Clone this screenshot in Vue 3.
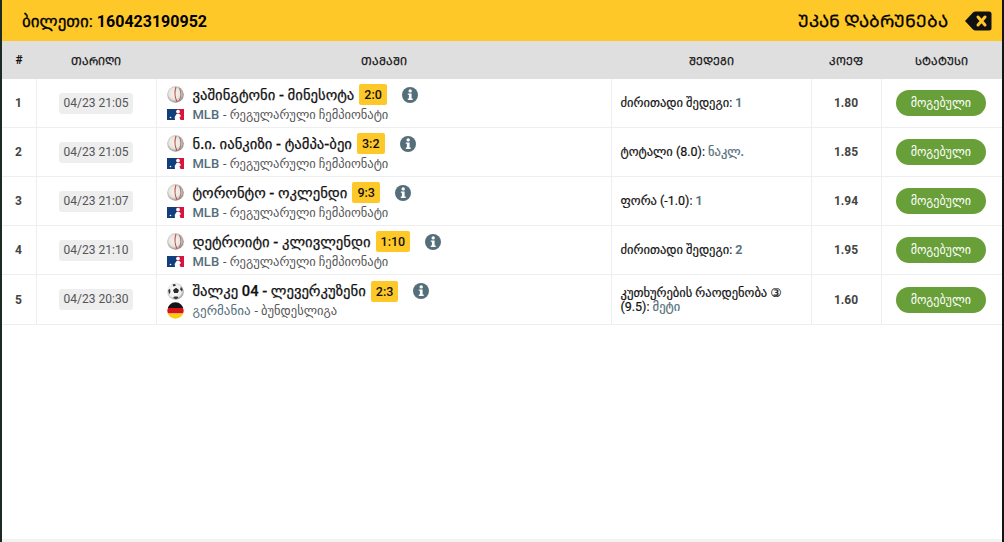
<script setup>
const rows = [
  { n: 1, date: '04/23 21:05', game: 'ვაშინგტონი - მინესოტა', score: '2:0', sport: 'b', league: 'MLB', sub: 'რეგულარული ჩემპიონატი', pick: 'ძირითადი შედეგი:', val: '1', odd: '1.80' },
  { n: 2, date: '04/23 21:05', game: 'ნ.ი. იანკიზი - ტამპა-ბეი', score: '3:2', sport: 'b', league: 'MLB', sub: 'რეგულარული ჩემპიონატი', pick: 'ტოტალი (8.0):', val: 'ნაკლ.', odd: '1.85' },
  { n: 3, date: '04/23 21:07', game: 'ტორონტო - ოკლენდი', score: '9:3', sport: 'b', league: 'MLB', sub: 'რეგულარული ჩემპიონატი', pick: 'ფორა (-1.0):', val: '1', odd: '1.94' },
  { n: 4, date: '04/23 21:10', game: 'დეტროიტი - კლივლენდი', score: '1:10', sport: 'b', league: 'MLB', sub: 'რეგულარული ჩემპიონატი', pick: 'ძირითადი შედეგი:', val: '2', odd: '1.95' },
  { n: 5, date: '04/23 20:30', game: 'შალკე 04 - ლევერკუზენი', score: '2:3', sport: 's', league: 'გერმანია', sub: 'ბუნდესლიგა', pick: 'კუთხურების რაოდენობა ③ (9.5):', val: 'მეტი', odd: '1.60' }
]
</script>

<template>
  <div class="page">
    <header class="top">
      <div class="ticket"><span class="ticket-label">ბილეთი:</span> 160423190952</div>
      <div class="back">
        <span class="back-text">ᲣᲙᲐᲜ ᲓᲐᲑᲠᲣᲜᲔᲑᲐ</span>
        <svg class="back-icon" width="27" height="20" viewBox="0 0 27 20">
          <path d="M0 10 8 1.500Q9 .5 10.500 .5H24Q26.500 .5 26.500 3V17Q26.500 19.500 24 19.500H10.500Q9 19.500 8 18.500Z" fill="#111" />
          <path d="M13 6 20 14M20 6 13 14" stroke="#ffc829" stroke-width="3" stroke-linecap="round" />
        </svg>
      </div>
    </header>
    <table class="tbl">
      <colgroup>
        <col class="c1" /><col class="c2" /><col class="c3" /><col class="c4" /><col class="c5" /><col class="c6" />
      </colgroup>
      <thead>
        <tr>
          <th class="hash">#</th><th>ᲗᲐᲠᲘᲦᲘ</th><th>ᲗᲐᲛᲐᲨᲘ</th><th>ᲨᲔᲓᲔᲒᲘ</th><th>ᲙᲝᲔᲤ</th><th>ᲡᲢᲐᲢᲣᲡᲘ</th>
        </tr>
      </thead>
      <tbody>
        <tr v-for="r in rows" :key="r.n">
          <td class="num">{{ r.n }}</td>
          <td class="center"><span class="date">{{ r.date }}</span></td>
          <td class="game">
            <div class="line1">
              <svg v-if="r.sport === 'b'" class="ball" width="17" height="17" viewBox="0 0 17 17">
                <defs>
                  <radialGradient id="bg" cx="45%" cy="45%" r="58%">
                    <stop offset="0%" stop-color="#f7f4f1" />
                    <stop offset="60%" stop-color="#e9e4df" />
                    <stop offset="100%" stop-color="#85807c" />
                  </radialGradient>
                </defs>
                <circle cx="8.500" cy="8.500" r="8.300" fill="url(#bg)" />
                <path d="M9 1Q6.500 8.500 10 16" fill="none" stroke="#b4574e" stroke-width="1.100" />
                <path d="M12.500 2Q15.500 8.500 12 15" fill="none" stroke="#b4776e" stroke-width="1.100" />
              </svg>
              <svg v-else class="ball" width="17" height="17" viewBox="0 0 17 17">
                <defs>
                  <radialGradient id="sb" cx="45%" cy="45%" r="58%">
                    <stop offset="0%" stop-color="#fff" />
                    <stop offset="70%" stop-color="#ececec" />
                    <stop offset="100%" stop-color="#8c8c8c" />
                  </radialGradient>
                </defs>
                <circle cx="8.500" cy="8.500" r="8.300" fill="url(#sb)" />
                <path d="M9 4.800 12 7 10.900 10H7.100L6 7Z" fill="#2b2b2b" />
                <path d="M5.500 1.500 8 1 9 2.500 6.500 3.500ZM1.200 7 3 5.800 3.500 9 2 11.500ZM14 3.800 15.800 6.500 14.800 8.500 13 6.200ZM6 15 7.500 13.500H10.500L11.500 15 9 16.200Z" fill="#3a3a3a" />
              </svg>
              <span class="title">{{ r.game }}</span>
              <span class="score">{{ r.score }}</span>
              <svg class="info" width="16" height="16" viewBox="0 0 16 16">
                <circle cx="8" cy="8" r="8" fill="#546e7a" />
                <circle cx="8.200" cy="3.900" r="1.700" fill="#fff" />
                <path d="M5.800 6.400H9.600V11.600H10.700V13H5.800V11.600H6.900V7.800H5.800Z" fill="#fff" />
              </svg>
            </div>
            <div class="line2">
              <span class="flag-box">
                <svg v-if="r.sport === 'b'" width="17" height="11" viewBox="0 0 17 11">
                  <rect width="10" height="11" fill="#123f7c" />
                  <rect x="10" width="7" height="11" fill="#d6163f" />
                  <circle cx="11" cy="2.600" r="1.900" fill="#fff" />
                  <path d="M8 11 7.700 8 9.500 5H12.500L14 7 12.500 8.500 13.500 11Z" fill="#fff" />
                  <circle cx="3.500" cy="8.500" r=".8" fill="#fff" />
                </svg>
                <svg v-else width="17" height="17" viewBox="0 0 17 17">
                  <clipPath id="gc"><circle cx="8.500" cy="8.500" r="8.200" /></clipPath>
                  <g clip-path="url(#gc)">
                    <rect width="17" height="6" fill="#151515" />
                    <rect y="6" width="17" height="5.500" fill="#d8141a" />
                    <rect y="11.500" width="17" height="5.500" fill="#fbcb10" />
                  </g>
                </svg>
              </span>
              <span class="league">{{ r.league }}</span>
              <span class="sub">- {{ r.sub }}</span>
            </div>
          </td>
          <td class="pick">{{ r.pick }} <span class="val">{{ r.val }}</span></td>
          <td class="center odd">{{ r.odd }}</td>
          <td class="center status-cell"><span class="status">მოგებული</span></td>
        </tr>
      </tbody>
    </table>
    <div class="foot"></div>
  </div>
</template>

<style scoped>
.page {
  box-sizing: border-box;
  width: 1004px;
  height: 542px;
  display: flex;
  flex-direction: column;
  border-left: 2px solid #1c2a24;
  border-right: 2px solid #141414;
  background: #fff;
  font-family: Roboto, "Liberation Sans", "DejaVu Sans", sans-serif;
  color: #222;
  overflow: hidden;
}
.top {
  height: 41px;
  flex: none;
  background: #ffc829;
  display: flex;
  align-items: center;
  justify-content: space-between;
  padding: 0 10px 0 20px;
  color: #000;
}
.ticket { font-size: 16px; font-weight: 700; }
.ticket-label { font-weight: 400; font-size: 17px; -webkit-text-stroke: .3px #000; }
.back { display: flex; align-items: center; gap: 17px; }
.back-text { font-size: 17px; -webkit-text-stroke: .3px #000; }
.tbl {
  width: 100%;
  table-layout: fixed;
  border-collapse: collapse;
  flex: none;
}
.c1 { width: 34px; }
.c2 { width: 120px; }
.c3 { width: 455px; }
.c4 { width: 200px; }
.c5 { width: 70px; }
th {
  height: 38px;
  background: #dfdfdf;
  font-size: 11px;
  font-weight: 400;
  padding: 0;
  color: #111;
  -webkit-text-stroke: .25px #111;
}
.hash { font-size: 12px; font-weight: 700; -webkit-text-stroke: 0; }
td {
  height: 48px;
  padding: 0;
  border-bottom: 1px solid #eee;
  border-left: 1px solid #eee;
  font-size: 12px;
}
td:first-child { border-left: 0; }
tr:last-child td { height: 49px; }
.num { padding-left: 13px; font-weight: 700; color: #444; }
.center { text-align: center; }
.date {
  display: inline-block;
  background: #eee;
  border-radius: 3px;
  padding: 0 5px;
  line-height: 21px;
  font-size: 12px;
  color: #555;
}
.game { padding-left: 10px; }
.line1 { display: flex; align-items: center; height: 22px; }
.ball { flex: none; }
.title { margin-left: 9px; font-size: 14.700px; font-weight: 500; color: #111; -webkit-text-stroke: .25px #111; }
.score {
  margin-left: 5px;
  background: #ffc829;
  border-radius: 2px;
  padding: 0 5px;
  line-height: 21px;
  font-size: 12.500px;
  font-weight: 500;
  color: #111;
}
.info { margin-left: 15px; flex: none; }
.line2 { display: flex; align-items: center; height: 17px; font-size: 12.500px; color: #555; }
.flag-box { width: 17px; display: flex; flex: none; align-items: center; justify-content: center; }
.league { margin-left: 9px; font-size: 13px; color: #546e7a; font-weight: 500; }
.sub { margin-left: 4px; }
.pick { padding-left: 9px; padding-right: 8px; line-height: 14px; font-size: 12.500px; color: #111; -webkit-text-stroke: .2px #111; }
.val { display: inline-block; line-height: 14px; color: #546e7a; font-weight: 500; -webkit-text-stroke: .2px #546e7a; }
.odd { font-weight: 700; color: #444; }
.status-cell { padding-right: 2px; }
.status {
  display: inline-block;
  width: 90px;
  height: 26px;
  line-height: 26px;
  border-radius: 13px;
  background: #689f38;
  color: #fff;
  font-size: 12px;
}
.foot {
  margin-top: auto;
  height: 3px;
  background: #f3f3f3;
}
</style>
